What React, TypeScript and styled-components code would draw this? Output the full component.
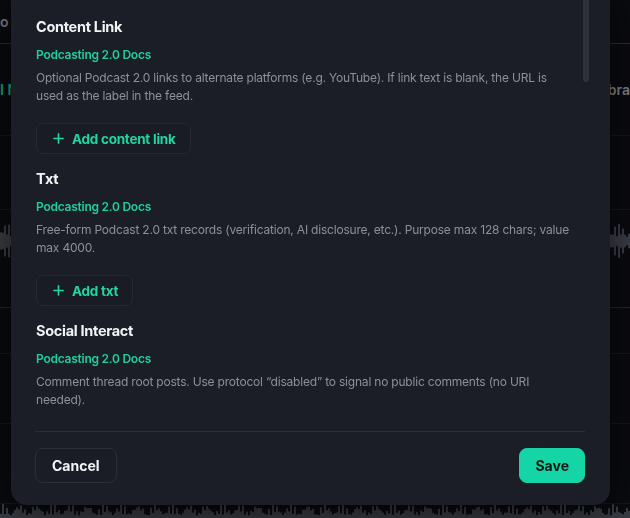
import styled, { createGlobalStyle } from "styled-components";

const GlobalStyle = createGlobalStyle`
  html, body {
    margin: 0;
    height: 100%;
    background: #0a0b0f;
    overflow: hidden;
  }
  body {
    font-family: Inter, "Noto Sans", sans-serif;
    -webkit-font-smoothing: antialiased;
  }
`;

const Backdrop = styled.div`
  height: 518px;
  display: flex;
  flex-direction: column;
  background: #0a0b0f;
  overflow: hidden;
`;

const TrackRow = styled.div<{ $h: number; $line?: string }>`
  flex: 0 0 ${(p) => p.$h}px;
  box-sizing: border-box;
  border-bottom: 1px solid ${(p) => p.$line || "#15171d"};
  display: flex;
  align-items: center;
  justify-content: space-between;
  font-size: 14px;
  font-weight: 600;
  color: #6b6f78;
  overflow: hidden;
`;

const EdgeLabel = styled.span<{ $green?: boolean }>`
  color: ${(p) => (p.$green ? "#17a884" : "#7d818a")};
  white-space: nowrap;
`;

const Wave = styled.svg<{ $h: number }>`
  display: block;
  flex: 0 0 ${(p) => p.$h}px;
  width: 100%;
  height: ${(p) => p.$h}px;
`;

const Modal = styled.div`
  position: fixed;
  left: 11px;
  right: 20px;
  top: -20px;
  bottom: 13px;
  background: #1b1e27;
  border-radius: 16px;
  box-shadow: 0 10px 40px rgba(0, 0, 0, 0.6);
  display: flex;
  flex-direction: column;
  overflow: hidden;
`;

const ScrollThumb = styled.div`
  position: absolute;
  right: 21px;
  top: 0;
  width: 6px;
  height: 102px;
  border-radius: 3px;
  background: #2d313c;
`;

const Body = styled.div`
  flex: 1;
  overflow: hidden;
  padding: 37px 25px 0 25px;
  display: flex;
  flex-direction: column;
  gap: 15px;
`;

const Section = styled.section`
  display: flex;
  flex-direction: column;
  align-items: flex-start;
`;

const Heading = styled.h3`
  margin: 0;
  font-size: 14.5px;
  line-height: 20px;
  font-weight: 700;
  letter-spacing: -0.3px;
  color: #f2f3f5;
`;

const DocsLink = styled.a`
  margin-top: 9px;
  font-size: 12px;
  line-height: 18px;
  font-weight: 600;
  letter-spacing: -0.25px;
  color: #1fcf9f;
  text-decoration: none;
`;

const Description = styled.p`
  margin: 5px 0 0;
  max-width: 538px;
  font-size: 12px;
  line-height: 18px;
  letter-spacing: -0.2px;
  color: #8b909b;
`;

const AddButton = styled.button`
  margin-top: 18px;
  height: 31px;
  padding: 0 14px 0 16px;
  display: inline-flex;
  align-items: center;
  gap: 8px;
  background: #191c24;
  border: 1px solid #252932;
  border-radius: 7px;
  color: #22d3a4;
  font-family: inherit;
  font-size: 13.5px;
  font-weight: 700;
  letter-spacing: -0.25px;
`;

const Footer = styled.div`
  margin: 0 25px 0 24px;
  padding: 16px 0 22px;
  border-top: 1px solid #2a2e38;
  display: flex;
  justify-content: space-between;
`;

const FooterButton = styled.button<{ $primary?: boolean }>`
  height: 35px;
  padding: 0 ${(p) => (p.$primary ? 15 : 16)}px;
  border-radius: 8px;
  font-family: inherit;
  font-size: 14px;
  font-weight: 700;
  border: 1px solid ${(p) => (p.$primary ? "#15d4a6" : "#2b2f39")};
  background: ${(p) => (p.$primary ? "#15d4a6" : "#1a1d25")};
  color: ${(p) => (p.$primary ? "#0e1714" : "#f2f3f5")};
`;

function Plus() {
  return (
    <svg width="11" height="11" viewBox="0 0 12 12" fill="none">
      <path d="M6 1v10M1 6h10" stroke="currentColor" strokeWidth="1.8" strokeLinecap="round" />
    </svg>
  );
}

function Waveform({ seed, h }: { seed: number; h: number }) {
  const bars = [];
  for (let i = 0; i < 315; i++) {
    const v = Math.abs(Math.sin(i * 1.7 + seed) * Math.cos(i * 0.37 + seed * 2));
    const bh = 25 + v * 75;
    bars.push(<rect key={i} x={i * 2} y={(100 - bh) / 2} width="2" height={bh} fill="#3a3d44" />);
  }
  return (
    <Wave $h={h} viewBox="0 0 630 100" preserveAspectRatio="none">
      {bars}
    </Wave>
  );
}

const sections = [
  {
    title: "Content Link",
    text: "Optional Podcast 2.0 links to alternate platforms (e.g. YouTube). If link text is blank, the URL is used as the label in the feed.",
    action: "Add content link",
  },
  {
    title: "Txt",
    text: "Free-form Podcast 2.0 txt records (verification, AI disclosure, etc.). Purpose max 128 chars; value max 4000.",
    action: "Add txt",
  },
  {
    title: "Social Interact",
    text: "Comment thread root posts. Use protocol “disabled” to signal no public comments (no URI needed).",
  },
];

export default function App() {
  return (
    <>
      <GlobalStyle />
      <Backdrop>
        <TrackRow $h={44} $line="#0f3a30">
          <EdgeLabel>o</EdgeLabel>
        </TrackRow>
        <TrackRow $h={92}>
          <EdgeLabel $green>I N</EdgeLabel>
          <EdgeLabel>bra</EdgeLabel>
        </TrackRow>
        <TrackRow $h={74} />
        <TrackRow $h={14} $line="#0a0b0f" />
        <Waveform seed={1} h={34} />
        <TrackRow $h={50} $line="#10302a" />
        <TrackRow $h={46} />
        <TrackRow $h={70} />
        <TrackRow $h={80} />
        <Waveform seed={3} h={30} />
      </Backdrop>
      <Modal>
        <ScrollThumb />
        <Body>
          {sections.map((s) => (
            <Section key={s.title}>
              <Heading>{s.title}</Heading>
              <DocsLink href="#">Podcasting 2.0 Docs</DocsLink>
              <Description>{s.text}</Description>
              {s.action && (
                <AddButton>
                  <Plus />
                  {s.action}
                </AddButton>
              )}
            </Section>
          ))}
        </Body>
        <Footer>
          <FooterButton>Cancel</FooterButton>
          <FooterButton $primary>Save</FooterButton>
        </Footer>
      </Modal>
    </>
  );
}
